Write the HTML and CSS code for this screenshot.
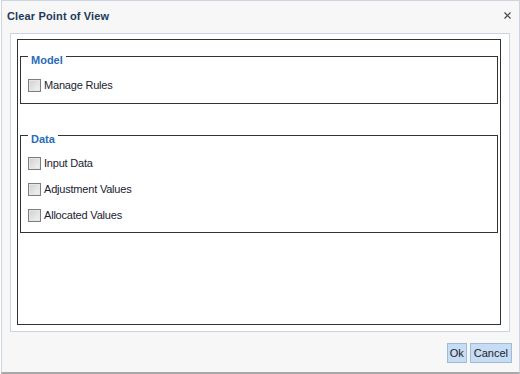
FILE: index.html
```html
<!DOCTYPE html>
<html lang="en">
<head>
    <meta charset="UTF-8">
    <title>Clear Point of View</title>
    <link rel="stylesheet" href="styles.css">
</head>
<body>
    <div class="dialog">
        <div class="titlebar">
            <span class="title">Clear Point of View</span>
            <span class="close">
                <svg width="7" height="7" viewBox="0 0 7 7">
                    <path d="M0.5 0.5 L6.5 6.5 M6.5 0.5 L0.5 6.5" stroke="#444" stroke-width="1.2"/>
                </svg>
            </span>
        </div>
        <div class="panel">
            <div class="box">
                <fieldset class="group first">
                    <legend>Model</legend>
                    <label class="row"><input type="checkbox" class="check"> Manage Rules</label>
                </fieldset>
                <fieldset class="group">
                    <legend>Data</legend>
                    <label class="row"><input type="checkbox" class="check"> Input Data</label>
                    <label class="row"><input type="checkbox" class="check"> Adjustment Values</label>
                    <label class="row"><input type="checkbox" class="check"> Allocated Values</label>
                </fieldset>
            </div>
        </div>
        <div class="footer">
            <button class="btn ok">Ok</button>
            <button class="btn">Cancel</button>
        </div>
    </div>
</body>
</html>
```

FILE: styles.css
```css
* {
    box-sizing: border-box;
    margin: 0;
    padding: 0;
}
body {
    background: #ffffff;
    font-family: 'Liberation Sans', Arial, sans-serif;
    font-size: 11px;
    color: #1a2230;
}
.dialog {
    width: 519px;
    height: 374px;
    margin-left: 1px;
    background: #f7f7f7;
    border: 1px solid #cdd6e0;
    border-bottom: 2px solid #a8a8a8;
    display: flex;
    flex-direction: column;
}
.titlebar {
    height: 32px;
    display: flex;
    align-items: center;
    justify-content: space-between;
    padding: 0 8px 2px 5px;
}
.title {
    font-weight: 700;
    font-size: 11px;
    color: #1b3a5c;
    letter-spacing: 0.15px;
}
.close {
    display: flex;
    margin-top: -2px;
}
.panel {
    height: 299px;
    margin: 0 9px 0 8px;
    background: #ffffff;
    border: 1px solid #cbd5e1;
    padding: 5px 8px 6px 6px;
}
.box {
    height: 286px;
    border: 1px solid #333333;
    padding: 0 2px;
}
.group {
    border: 1px solid #333333;
    margin-top: 20px;
    padding: 4px 0 4px 7px;
    display: flex;
    flex-direction: column;
}
.group.first {
    margin-top: 5px;
    padding: 5px 0 5px 7px;
}
.group legend {
    font-weight: 700;
    font-size: 11px;
    color: #2a6cb8;
    line-height: 14px;
    padding: 8px 3px 0 3px;
}
.row {
    height: 26px;
    display: flex;
    align-items: center;
    gap: 3px;
    letter-spacing: -0.2px;
}
.check {
    appearance: none;
    width: 13px;
    height: 13px;
    border: 1px solid #7c7d7e;
    background: linear-gradient(135deg, #cfcfcf, #f4f4f4);
    box-shadow: inset 0 0 0 1px #e6e6e6;
}
.footer {
    display: flex;
    justify-content: flex-end;
    gap: 3px;
    padding: 11px 7px 0 0;
}
.btn {
    height: 20px;
    min-width: 20px;
    padding: 0 3px;
    background: #c6ddf4;
    border: 1px solid #9dbcdb;
    font-family: 'Liberation Sans', Arial, sans-serif;
    font-size: 11px;
    color: #1a2230;
}
.btn.ok {
    width: 20px;
    padding: 0;
}
```
